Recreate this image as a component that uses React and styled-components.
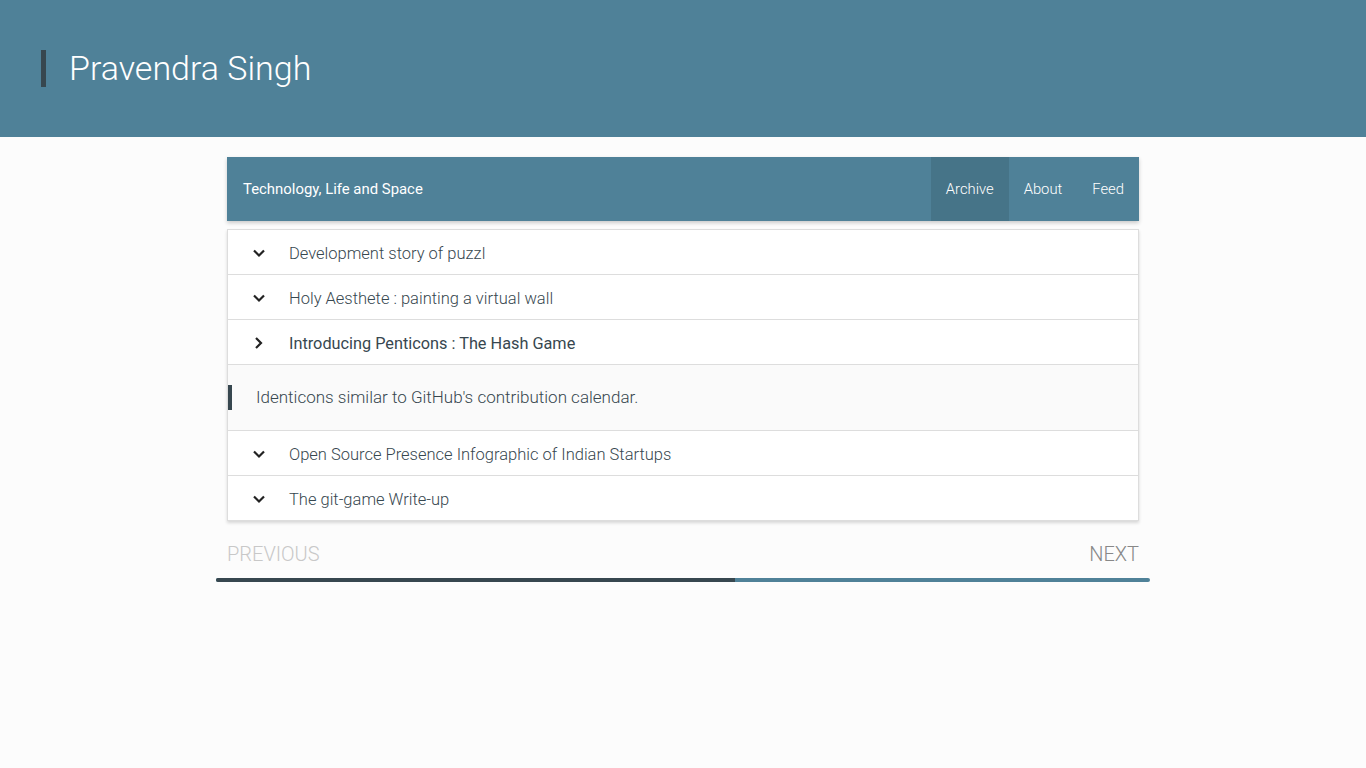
import React, { useState } from "react";
import styled, { createGlobalStyle } from "styled-components";

const GlobalStyle = createGlobalStyle`
  html, body {
    margin: 0;
    padding: 0;
    background: #fcfcfc;
    font-family: Roboto, "Liberation Sans", sans-serif;
  }
`;

const Masthead = styled.header`
  background: #4f8198;
  height: 137px;
  display: flex;
  align-items: center;
  padding-left: 41px;
  box-sizing: border-box;
`;

const SiteName = styled.h1`
  margin: 0;
  margin-top: -1px;
  border-left: 5px solid #37474f;
  padding-left: 23px;
  font-size: 34px;
  font-weight: 300;
  line-height: 37px;
  color: #fff;
`;

const Main = styled.main`
  width: 912px;
  margin: 20px auto 0;
`;

const NavBar = styled.nav`
  height: 64px;
  background: #4f8198;
  display: flex;
  align-items: center;
  justify-content: space-between;
  box-shadow: 0 2px 4px rgba(0, 0, 0, 0.2);
`;

const Tagline = styled.div`
  padding-left: 16px;
  color: #fff;
  font-size: 14.9px;
  font-weight: 400;
`;

const NavLinks = styled.ul`
  display: flex;
  height: 100%;
  margin: 0;
  padding: 0;
  list-style: none;
`;

const NavLink = styled.li`
  height: 100%;
  display: flex;
  align-items: center;
  padding: 0 15px;
  color: #fff;
  font-size: 14.8px;
  font-weight: 300;
  background: ${p => (p.active ? "#467488" : "transparent")};
`;

const List = styled.ul`
  margin: 8px 0 0;
  padding: 0;
  list-style: none;
  background: #fff;
  border: 1px solid #ddd;
  box-shadow: 0 2px 3px rgba(0, 0, 0, 0.15);
`;

const Item = styled.li`
  border-bottom: 1px solid #ddd;
  &:last-child {
    border-bottom: none;
  }
`;

const Row = styled.div`
  height: 44px;
  box-sizing: border-box;
  padding-top: 2px;
  display: flex;
  align-items: center;
  cursor: pointer;
`;

const Chevron = styled.span`
  width: 61px;
  display: flex;
  justify-content: center;
  color: #222;
`;

const Title = styled.span`
  font-size: ${p => (p.open ? "16.3px" : "16.5px")};
  font-weight: ${p => (p.open ? 400 : 300)};
  color: #37474f;
`;

const Summary = styled.div`
  background: #fafafa;
  border-top: 1px solid #ddd;
  height: 65px;
  display: flex;
  align-items: center;
`;

const Quote = styled.p`
  margin: 0;
  border-left: 4px solid #37474f;
  padding-left: 24px;
  line-height: 25px;
  font-size: 17px;
  font-weight: 300;
  color: #37474f;
`;

const Pager = styled.div`
  display: flex;
  justify-content: space-between;
  align-items: center;
  height: 44px;
  margin-top: 11px;
`;

const PageLink = styled.span`
  font-size: 20px;
  font-weight: 300;
  color: ${p => (p.disabled ? "#c8c8c8" : "#888")};
`;

const Progress = styled.div`
  width: 934px;
  margin: 2px 0 0 -11px;
  height: 4px;
  border-radius: 2px;
  background: #4f8198;
  overflow: hidden;
`;

const ProgressFill = styled.div`
  height: 100%;
  background: #37474f;
`;

const ChevronIcon = ({ open }) => (
  <svg width="14" height="14" viewBox="0 0 14 14">
    <path
      d={open ? "M4 2 L9 7 L4 12" : "M2 4.5 L7 9.5 L12 4.5"}
      fill="none"
      stroke="#222"
      strokeWidth="2.2"
    />
  </svg>
);

const posts = [
  { title: "Development story of puzzl" },
  { title: "Holy Aesthete : painting a virtual wall" },
  {
    title: "Introducing Penticons : The Hash Game",
    summary: "Identicons similar to GitHub's contribution calendar.",
  },
  { title: "Open Source Presence Infographic of Indian Startups" },
  { title: "The git-game Write-up" },
];

export default function App() {
  const [openIndex, setOpenIndex] = useState(2);

  return (
    <>
      <GlobalStyle />
      <Masthead>
        <SiteName>Pravendra Singh</SiteName>
      </Masthead>
      <Main>
        <NavBar>
          <Tagline>Technology, Life and Space</Tagline>
          <NavLinks>
            <NavLink active>Archive</NavLink>
            <NavLink>About</NavLink>
            <NavLink>Feed</NavLink>
          </NavLinks>
        </NavBar>
        <List>
          {posts.map((post, i) => {
            const open = i === openIndex;
            return (
              <Item key={post.title}>
                <Row onClick={() => setOpenIndex(open ? -1 : i)}>
                  <Chevron>
                    <ChevronIcon open={open} />
                  </Chevron>
                  <Title open={open}>{post.title}</Title>
                </Row>
                {open && post.summary && (
                  <Summary>
                    <Quote>{post.summary}</Quote>
                  </Summary>
                )}
              </Item>
            );
          })}
        </List>
        <Pager>
          <PageLink disabled>PREVIOUS</PageLink>
          <PageLink>NEXT</PageLink>
        </Pager>
        <Progress>
          <ProgressFill style={{ width: `${(519 / 934) * 100}%` }} />
        </Progress>
      </Main>
    </>
  );
}
